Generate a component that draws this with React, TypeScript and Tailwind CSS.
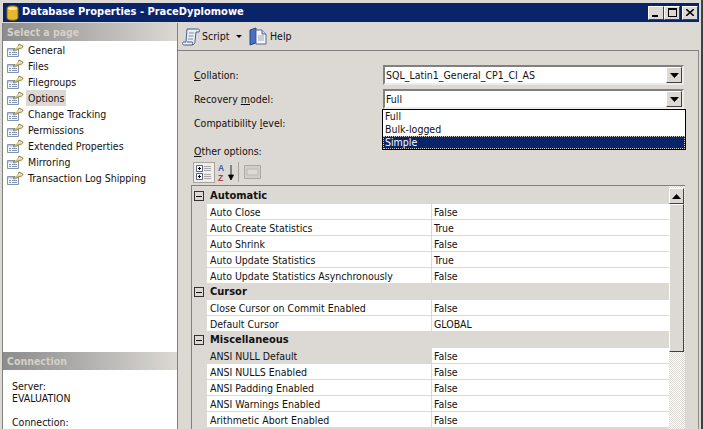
const pages = [
  "General",
  "Files",
  "Filegroups",
  "Options",
  "Change Tracking",
  "Permissions",
  "Extended Properties",
  "Mirroring",
  "Transaction Log Shipping",
];

const groups = [
  {
    name: "Automatic",
    rows: [
      ["Auto Close", "False"],
      ["Auto Create Statistics", "True"],
      ["Auto Shrink", "False"],
      ["Auto Update Statistics", "True"],
      ["Auto Update Statistics Asynchronously", "False"],
    ],
  },
  {
    name: "Cursor",
    rows: [
      ["Close Cursor on Commit Enabled", "False"],
      ["Default Cursor", "GLOBAL"],
    ],
  },
  {
    name: "Miscellaneous",
    rows: [
      ["ANSI NULL Default", "False"],
      ["ANSI NULLS Enabled", "False"],
      ["ANSI Padding Enabled", "False"],
      ["ANSI Warnings Enabled", "False"],
      ["Arithmetic Abort Enabled", "False"],
    ],
  },
];

const PageIcon = () => (
  <svg width="18" height="15" viewBox="0 0 18 15" className="shrink-0">
    <path d="M1.500 5.500h11v8h-11z" fill="#f4f6fa" stroke="#8593ad" />
    <path d="M2 6h10v1.500H2z" fill="#b9c6de" />
    <path d="M3 9.500h2M6 9.500h5M3 11.500h2M6 11.500h5" stroke="#7f93bb" />
    <path d="M7 7l5-3 1-3 4 2-1 2-4 1-4 2z" fill="#efd271" stroke="#77662c" strokeWidth="0.7" />
    <path d="M9 5.500l4-2 3 .5" stroke="#fff6c8" fill="none" strokeWidth="0.8" />
  </svg>
);

const DropArrow = () => (
  <div className="w-[16px] h-[16px] bg-[#dcd9d4] border border-t-white border-l-white border-r-[#404040] border-b-[#404040] flex items-center justify-center">
    <svg width="9" height="5" viewBox="0 0 9 5">
      <path d="M0 0h9L4.500 5z" fill="#000" />
    </svg>
  </div>
);

const Combo = ({ text }: { text: string }) => (
  <div className="w-[301px] h-[20px] bg-white border-2 border-t-[#808080] border-l-[#808080] border-r-[#ecebe8] border-b-[#ecebe8] flex items-center justify-between">
    <span className="pl-[1px] pt-[1px]">{text}</span>
    <DropArrow />
  </div>
);

const Label = ({ hot, before, after }: { hot: string; before?: string; after: string }) => (
  <span>
    {before}
    <span className="underline">{hot}</span>
    {after}
  </span>
);

const SectionHeader = ({ text }: { text: string }) => (
  <div className="h-[18px] pt-[2px] bg-gradient-to-r from-[#8c8c8c] to-[#dcd9d4] flex items-center pl-[4px] font-bold text-[#d4d0c8]">
    {text}
  </div>
);

export default function App() {
  return (
    <div className="relative w-[703px] h-[429px] overflow-hidden bg-[#dcd9d4] border-r-2 border-[#404040] pt-[3px] pl-[2px] text-[10.5px] font-['DejaVu_Sans_Condensed','DejaVu_Sans',sans-serif] text-[#111]">
      {/* title bar */}
      <div className="h-[19px] ml-[1px] mr-[2px] bg-[#0a246a] flex items-center pl-[2px] pr-[1px]">
        <svg width="14" height="16" viewBox="0 0 14 16" className="shrink-0">
          <path d="M2 3c0-3 11-3 11 0v10c0 3-11 3-11 0z" fill="#e8b830" stroke="#8a6a10" />
          <ellipse cx="7.500" cy="3.500" rx="4.500" ry="1.500" fill="#fbe9a0" />
        </svg>
        <span className="ml-[3px] text-white font-bold text-[11px]">Database Properties - PraceDyplomowe</span>
        <div className="ml-auto flex">
          {["min", "max", "close"].map((b) => (
            <div
              key={b}
              className={`w-[16px] h-[14px] bg-[#dcd9d4] border border-t-white border-l-white border-r-[#404040] border-b-[#404040] flex items-center justify-center ${b === "close" ? "ml-[2px]" : ""}`}
            >
              {b === "min" && <div className="w-[6px] h-[2px] bg-black mt-[7px] -ml-[2px]" />}
              {b === "max" && <div className="w-[9px] h-[9px] border border-t-2 border-black" />}
              {b === "close" && (
                <svg width="8" height="7" viewBox="0 0 8 7">
                  <path d="M0 0l8 7M8 0L0 7" stroke="#000" strokeWidth="1.500" />
                </svg>
              )}
            </div>
          ))}
        </div>
      </div>

      <div className="mt-[1px] flex h-[406px]">
        {/* left panel */}
        <div className="w-[176px] shrink-0 bg-white border-l border-r border-[#808080] flex flex-col">
          <SectionHeader text="Select a page" />
          <div className="h-[311px] pt-[1px]">
            {pages.map((p) => (
              <div key={p} className="h-[16px] flex items-center pl-[3px]">
                <PageIcon />
                <span
                  className={`ml-[2px] px-[2px] pt-[2px] h-[16px] flex items-center ${p === "Options" ? "bg-[#dcd9d4]" : ""}`}
                >
                  {p}
                </span>
              </div>
            ))}
          </div>
          <SectionHeader text="Connection" />
          <div className="pl-[9px] pt-[10px] leading-[12px]">
            <div>Server:</div>
            <div>EVALUATION</div>
            <div className="mt-[12px]">Connection:</div>
          </div>
        </div>

        {/* right panel */}
        <div className="flex-1 flex flex-col">
          <div className="h-[28px] mr-[2px] border-b border-[#808080] flex items-center pl-[3px]">
            <svg width="20" height="20" viewBox="0 0 20 20" className="shrink-0">
              <path d="M6 2h11c1 0 2 1 1 3h-3l-1 9c0 2-1 4-3 4H3c-2 0-2-3 0-3h2z" fill="#e9edf4" stroke="#4a5f8a" />
              <path d="M6 15h5c1 0 1 2 0 3" fill="none" stroke="#4a5f8a" />
              <path d="M8 6h5M7.500 9h5M7 12h5" stroke="#7a8cb0" />
            </svg>
            <span className="ml-[1px] w-[27px]">Script</span>
            <svg width="6" height="3" viewBox="0 0 6 3" className="ml-[7px]">
              <path d="M0 0h6L3 3z" fill="#000" />
            </svg>
            <svg width="18" height="19" viewBox="0 0 18 19" className="ml-[7px] shrink-0">
              <path d="M1 3l6-2v15l-6 2z" fill="#4a6fc0" stroke="#2c4585" />
              <path d="M7 3h6l4 4v10H7z" fill="#f4f6fa" stroke="#56688f" />
              <path d="M13 3v4h4" fill="#c8d3e8" stroke="#56688f" />
              <path d="M9 9h6M9 11h6M9 13h6" stroke="#9aa8c4" />
            </svg>
            <span className="ml-[3px]">Help</span>
          </div>

          <div className="flex-1 pl-[13px] pt-[14px] border-r border-[#8f8c87] mr-[2px]">
            <div className="flex items-center h-[20px]">
              <div className="w-[192px] pl-[3px] pt-[2px]">
                <Label hot="C" after="ollation:" />
              </div>
              <Combo text="SQL_Latin1_General_CP1_CI_AS" />
            </div>
            <div className="flex items-center h-[20px] mt-[4px]">
              <div className="w-[192px] pl-[3px] pt-[2px]">
                <Label before="Recovery " hot="m" after="odel:" />
              </div>
              <Combo text="Full" />
            </div>
            <div className="mt-[4px] h-[20px] flex items-center pl-[3px] pt-[2px]">
              <Label before="Compatibility " hot="l" after="evel:" />
            </div>
            <div className="mt-[10px] h-[16px] flex items-center pl-[3px] pt-[2px]">
              <Label hot="O" after="ther options:" />
            </div>

            {/* property grid toolbar */}
            <div className="mt-[2px] h-[22px] flex items-center pl-[2px]">
              <div className="w-[22px] h-[21px] bg-[#eeede9] border border-[#a8a49c] flex items-center justify-center">
                <svg width="16" height="17" viewBox="0 0 16 17">
                  <path d="M.5 1.500h6v6h-6zM.5 9.500h6v6h-6z" fill="#fff" stroke="#55628a" />
                  <path d="M2 4.500h3M3.500 3v3M2 12.500h3M3.500 11v3" stroke="#000" />
                  <path d="M8 2.500h7M8 4.500h7M8 6.500h7M8 10.500h7M8 12.500h7M8 14.500h7" stroke="#a8a8a8" />
                </svg>
              </div>
              <svg width="18" height="19" viewBox="0 0 18 19" className="ml-[2px]">
                <text x="1" y="8" fontSize="8.500" fontFamily="Liberation Sans" fontWeight="700" fill="#3f5fb0">A</text>
                <text x="1" y="18" fontSize="8.500" fontFamily="Liberation Sans" fontWeight="700" fill="#b04040">Z</text>
                <path d="M14 2v13M11.500 12l2.500 5 2.500-5z" stroke="#000" fill="#000" strokeWidth="0.8" />
              </svg>
              <div className="ml-[3px] w-[1px] h-[20px] bg-[#a8a49c]" />
              <svg width="17" height="16" viewBox="0 0 17 16" className="ml-[5px]">
                <path d="M.5 1.500h16v13H.5z" fill="#d0cdc7" stroke="#aeaaa3" />
                <path d="M3 5h11v6H3z" fill="#dcd9d4" stroke="#bab8b0" />
              </svg>
            </div>

            {/* property grid */}
            <div className="mt-[2px] w-[494px] h-[244px] border-t border-l border-[#808080] flex">
              <div className="flex-1 pt-[2px]">
                {groups.map((g) => (
                  <div key={g.name}>
                    <div className="h-[16px] flex items-center pl-[2px] text-[11px] font-bold">
                      <div className="w-[10px] h-[10px] border border-[#333] flex items-center justify-center">
                        <div className="w-[6px] h-[1px] bg-[#111]" />
                      </div>
                      <span className="ml-[6px] pt-[1px]">{g.name}</span>
                    </div>
                    {g.rows.map(([k, v]) => (
                      <div key={k} className="h-[16px] flex">
                        <div
                          className={`w-[224px] ml-[15px] pl-[3px] pt-[2px] flex items-center border-b border-[#dcd9d4] ${k === "ANSI NULL Default" ? "bg-[#dcd9d4]" : "bg-white"}`}
                        >
                          {k}
                        </div>
                        <div className="flex-1 pl-[2px] pt-[2px] flex items-center bg-white border-l border-b border-[#dcd9d4]">
                          {v}
                        </div>
                      </div>
                    ))}
                  </div>
                ))}
              </div>
              {/* scrollbar */}
              <div className="w-[16px] pt-[2px] flex flex-col bg-[repeating-conic-gradient(#dcd9d4_0_25%,#fff_0_50%)] bg-[length:2px_2px]">
                <div className="h-[16px] mr-[1px] bg-[#dcd9d4] border border-t-white border-l-white border-r-[#404040] border-b-[#404040] flex items-center justify-center">
                  <svg width="9" height="5" viewBox="0 0 9 5">
                    <path d="M0 5h9L4.500 0z" fill="#000" />
                  </svg>
                </div>
                <div className="h-[148px] mr-[1px] bg-[#dcd9d4] border border-t-white border-l-white border-r-[#404040] border-b-[#404040]" />
              </div>
            </div>
          </div>
        </div>
      </div>

      {/* open combo list */}
      <div className="absolute left-[382px] top-[109px] w-[304px] h-[41px] bg-white border border-black leading-[13px]">
        <div className="pl-[2px]">Full</div>
        <div className="pl-[2px]">Bulk-logged</div>
        <div className="pl-[2px] bg-[#0a246a] text-white outline-1 -outline-offset-1 outline-dotted outline-[#d4d0c8]">
          Simple
        </div>
      </div>
    </div>
  );
}
